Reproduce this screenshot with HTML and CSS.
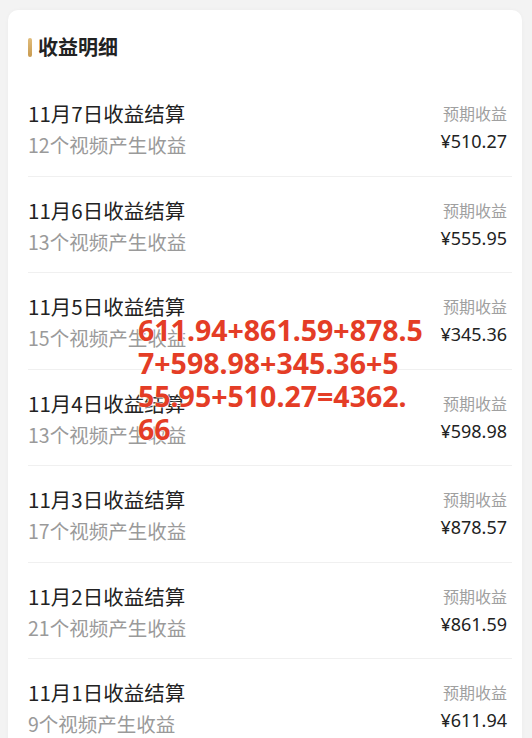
FILE: index.html
```html
<!DOCTYPE html>
<html lang="zh-CN">

<head>
    <meta charset="UTF-8">
    <meta name="viewport" content="width=device-width, initial-scale=1.0">
    <title>收益明细</title>
    <link rel="stylesheet" href="styles.css">
</head>

<body>
    <div class="card">
        <div class="card-head">
            <span class="bar"></span>
            <span class="head-text">收益明细</span>
        </div>

        <div class="row">
            <div class="left">
                <div class="title">11月7日收益结算</div>
                <div class="sub">12个视频产生收益</div>
            </div>
            <div class="right">
                <div class="label">预期收益</div>
                <div class="amount">¥510.27</div>
            </div>
        </div>
        <div class="row">
            <div class="left">
                <div class="title">11月6日收益结算</div>
                <div class="sub">13个视频产生收益</div>
            </div>
            <div class="right">
                <div class="label">预期收益</div>
                <div class="amount">¥555.95</div>
            </div>
        </div>
        <div class="row">
            <div class="left">
                <div class="title">11月5日收益结算</div>
                <div class="sub">15个视频产生收益</div>
            </div>
            <div class="right">
                <div class="label">预期收益</div>
                <div class="amount">¥345.36</div>
            </div>
        </div>
        <div class="row">
            <div class="left">
                <div class="title">11月4日收益结算</div>
                <div class="sub">13个视频产生收益</div>
            </div>
            <div class="right">
                <div class="label">预期收益</div>
                <div class="amount">¥598.98</div>
            </div>
        </div>
        <div class="row">
            <div class="left">
                <div class="title">11月3日收益结算</div>
                <div class="sub">17个视频产生收益</div>
            </div>
            <div class="right">
                <div class="label">预期收益</div>
                <div class="amount">¥878.57</div>
            </div>
        </div>
        <div class="row">
            <div class="left">
                <div class="title">11月2日收益结算</div>
                <div class="sub">21个视频产生收益</div>
            </div>
            <div class="right">
                <div class="label">预期收益</div>
                <div class="amount">¥861.59</div>
            </div>
        </div>
        <div class="row">
            <div class="left">
                <div class="title">11月1日收益结算</div>
                <div class="sub">9个视频产生收益</div>
            </div>
            <div class="right">
                <div class="label">预期收益</div>
                <div class="amount">¥611.94</div>
            </div>
        </div>
    </div>

    <!-- 手写的合计 -->
    <div class="sum">
        <div>611.94+861.59+878.5</div>
        <div>7+598.98+345.36+5</div>
        <div>55.95+510.27=4362.</div>
        <div>66</div>
    </div>
</body>

</html>
```

FILE: styles.css
```css
body {
    margin: 0;
    background: #f3f3f3;
    font-family: "Noto Sans CJK SC", "Noto Sans", sans-serif;
    overflow: hidden;
    height: 738px;
    position: relative;
}

.card {
    margin: 10px 10px 0 8px;
    background: #fff;
    border-radius: 10px;
    padding: 0 10px 0 20px;
    box-shadow: 0 0 4px rgba(0, 0, 0, 0.03);
}

.card-head {
    display: flex;
    align-items: center;
    padding: 23px 0 19px;
    height: 28px;
}

.bar {
    width: 4px;
    height: 19px;
    border-radius: 2px;
    background: linear-gradient(to bottom, #e1bd7c, #c89a4f);
    margin-right: 6px;
}

.head-text {
    font-size: 20px;
    font-weight: 700;
    color: #222;
    line-height: 28px;
}

.row {
    display: flex;
    justify-content: space-between;
    padding: 19px 0 16.5px;
    border-bottom: 1px solid #f0f0f0;
}

.title {
    font-size: 20.5px;
    line-height: 28px;
    color: #222;
}

.sub {
    margin-top: 4px;
    font-size: 19.5px;
    line-height: 28px;
    color: #9a9a9a;
}

.right {
    text-align: right;
    padding-right: 5px;
}

.label {
    font-size: 16px;
    line-height: 28px;
    color: #a0a0a0;
}

.amount {
    font-family: "Noto Sans", sans-serif;
    font-size: 18px;
    line-height: 28px;
    color: #222;
}

.sum {
    position: absolute;
    left: 138px;
    top: 314px;
    font-family: "Noto Sans", sans-serif;
    font-weight: 700;
    font-size: 28.5px;
    line-height: 33px;
    color: #e43d26;
    text-shadow: 0 0 2px #fff, 0 0 2px #fff, 0 0 1px #fff;
}
```
